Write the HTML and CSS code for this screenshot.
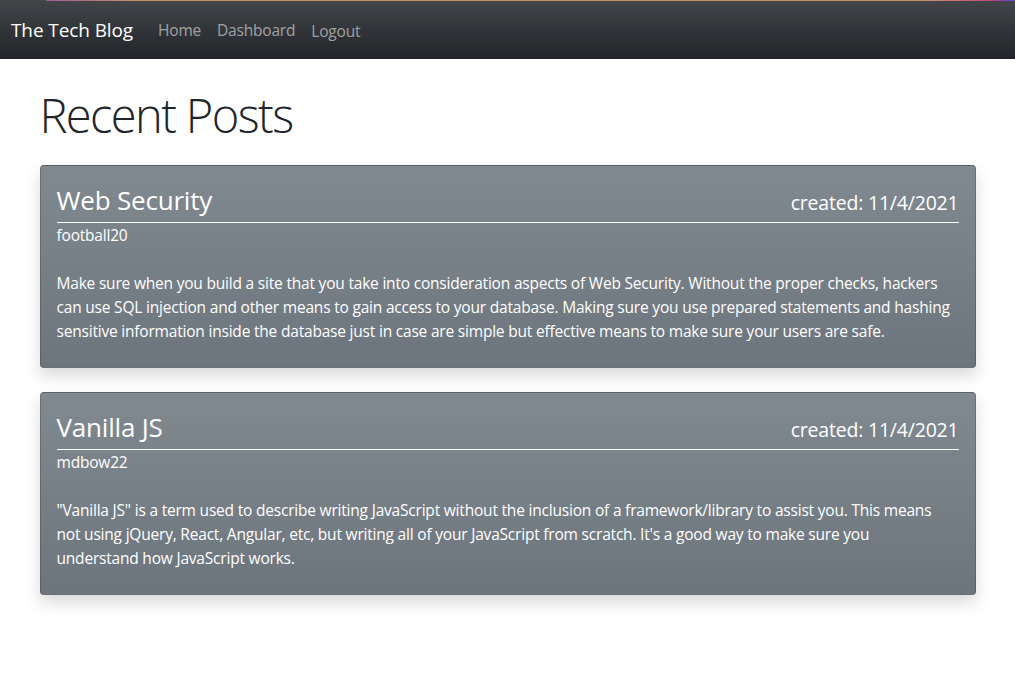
FILE: index.html
```html
<!DOCTYPE html>
<html lang="en">
<head>
<meta charset="utf-8">
<title>The Tech Blog</title>
<link rel="stylesheet" href="styles.css">
</head>
<body>
<nav class="navbar">
  <div class="nav-inner">
    <a class="brand" href="#">The Tech Blog</a>
    <ul class="nav-links">
      <li><a href="#">Home</a></li>
      <li><a href="#">Dashboard</a></li>
      <li><a class="logout" href="#">Logout</a></li>
    </ul>
  </div>
</nav>
<main class="container">
  <h1 class="page-title">Recent Posts</h1>
  <article class="card">
    <div class="card-body">
      <div class="card-head">
        <h3 class="post-title">Web Security</h3>
        <h5 class="post-date">created: 11/4/2021</h5>
      </div>
      <p class="author">football20</p>
      <p class="content">Make sure when you build a site that you take into consideration aspects of Web Security. Without the proper checks, hackers can use SQL injection and other means to gain access to your database. Making sure you use prepared statements and hashing sensitive information inside the database just in case are simple but effective means to make sure your users are safe.</p>
    </div>
  </article>
  <article class="card">
    <div class="card-body">
      <div class="card-head">
        <h3 class="post-title">Vanilla JS</h3>
        <h5 class="post-date">created: 11/4/2021</h5>
      </div>
      <p class="author">mdbow22</p>
      <p class="content">"Vanilla JS" is a term used to describe writing JavaScript without the inclusion of a framework/library to assist you. This means not using jQuery, React, Angular, etc, but writing all of your JavaScript from scratch. It's a good way to make sure you understand&nbsp;how JavaScript works.</p>
    </div>
  </article>
</main>
</body>
</html>
```

FILE: styles.css
```css
* { box-sizing: border-box; }
html, body { margin: 0; padding: 0; }
body {
  font-family: "Open Sans", "Noto Sans", sans-serif;
  font-size: 15.5px;
  letter-spacing: -0.2px;
  line-height: 24px;
  color: #212529;
  background: #fff;
}
.navbar {
  position: relative;
  height: 59px;
  background-color: #212529;
  background-image: linear-gradient(180deg, rgba(255,255,255,.15), rgba(255,255,255,0));
}
.navbar::before {
  content: "";
  position: absolute;
  left: 0; right: 0; top: 0;
  height: 1px;
  background: linear-gradient(90deg, transparent 0, transparent 46px, #a0609e 46px, #b5707f 90px, #c98b6c 130px, #c98b6c 930px, #c4507a 985px, #b03a90 1000px, #6a4ad0 1004px, #6a4ad0 100%);
}
.nav-inner {
  display: flex;
  align-items: center;
  height: 100%;
  padding: 0 11px;
}
.brand {
  color: #fff;
  text-decoration: none;
  font-size: 19px;
  letter-spacing: -0.1px;
  line-height: 30px;
  margin-right: 17px;
}
.nav-links {
  display: flex;
  list-style: none;
  margin: 0;
  padding: 0;
}
.nav-links a {
  display: block;
  padding: 0 8px;
  color: rgba(255,255,255,.55);
  text-decoration: none;
  font-size: 15.5px;
  line-height: 24px;
}
.nav-links .logout { position: relative; top: 1px; }
.container {
  max-width: 960px;
  margin: 0 auto;
  padding: 0 12px;
}
.page-title {
  font-size: 47px;
  font-weight: 300;
  letter-spacing: -1.6px;
  line-height: 56px;
  margin: 28px 0 22px;
}
.card {
  background-color: #6c757d;
  background-image: linear-gradient(180deg, rgba(255,255,255,.15), rgba(255,255,255,0));
  border: 1px solid rgba(0,0,0,.175);
  border-radius: 4px;
  box-shadow: 0 8px 16px rgba(0,0,0,.15);
  color: #fff;
  margin-bottom: 24px;
}
.card-body { padding: 18px 16px 24px; }
.card-head {
  display: flex;
  justify-content: space-between;
  align-items: baseline;
  border-bottom: 1px solid #fff;
}
.post-title {
  margin: 0 0 6px;
  font-size: 26px;
  font-weight: 400;
  letter-spacing: -0.2px;
  line-height: 32px;
}
.post-date {
  margin: 0;
  font-size: 19.5px;
  font-weight: 400;
  letter-spacing: -0.2px;
  line-height: 24px;
}
.author { margin: 0 0 24px; }
.content { margin: 0; }
```
